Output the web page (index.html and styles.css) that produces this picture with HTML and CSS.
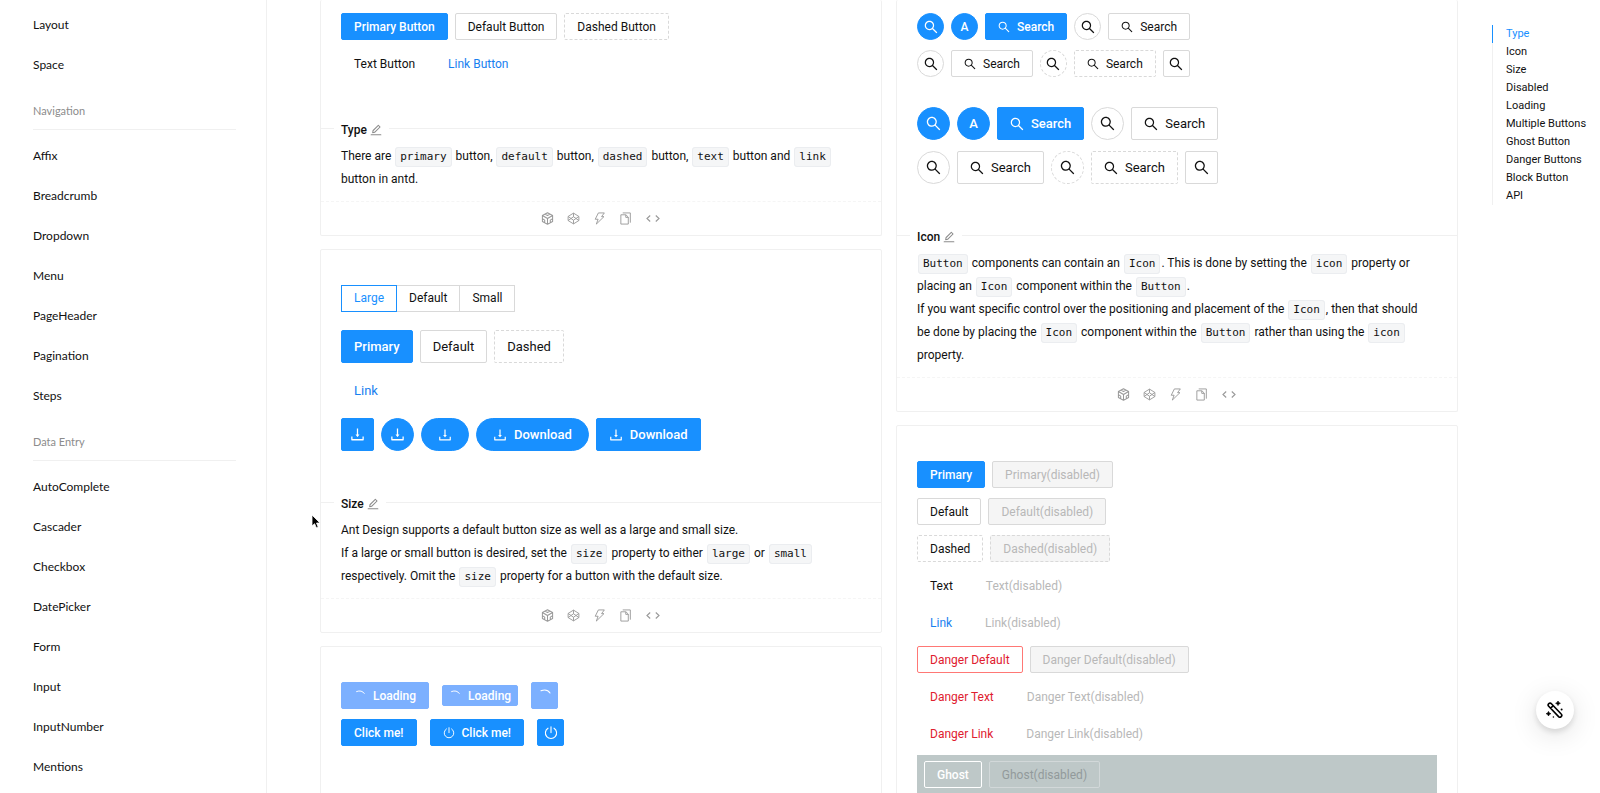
FILE: index.html
```html
<!DOCTYPE html>
<html lang="en">
<head>
  <meta charset="UTF-8">
  <meta name="viewport" content="width=device-width, initial-scale=1.0">
  <title>Button - Ant Design</title>
  <link rel="stylesheet" href="styles.css">
</head>
<body>
  <!-- Icon definitions -->
  <svg class="sprite" aria-hidden="true">
    <symbol id="search" viewBox="64 64 896 896"><path fill="currentColor" d="M909.6 854.5L649.9 594.8C690.2 542.7 712 479 712 412c0-80.2-31.3-155.4-87.9-212.1-56.6-56.7-132-87.9-212.1-87.9s-155.5 31.3-212.1 87.9C143.2 256.5 112 331.8 112 412c0 80.1 31.3 155.5 87.9 212.1C256.5 680.8 331.8 712 412 712c67 0 130.6-21.8 182.7-62l259.7 259.6a8.2 8.2 0 0011.6 0l43.6-43.5a8.2 8.2 0 000-11.6zM570.4 570.4C528 612.7 471.8 636 412 636s-116-23.3-158.4-65.6C211.3 528 188 471.8 188 412s23.3-116.1 65.6-158.4C296 211.3 352.2 188 412 188s116.1 23.2 158.4 65.6S636 352.2 636 412s-23.3 116.1-65.6 158.4z"/></symbol>
    <symbol id="download" viewBox="64 64 896 896"><path fill="currentColor" d="M505.7 661a8 8 0 0012.6 0l112-141.7c4.1-5.2.4-12.9-6.3-12.9h-74.1V168c0-4.4-3.6-8-8-8h-60c-4.4 0-8 3.6-8 8v338.3H400c-6.7 0-10.4 7.7-6.3 12.9l112 141.8zM878 626h-60c-4.4 0-8 3.6-8 8v154H214V634c0-4.4-3.6-8-8-8h-60c-4.4 0-8 3.6-8 8v198c0 17.7 14.3 32 32 32h684c17.7 0 32-14.3 32-32V634c0-4.4-3.6-8-8-8z"/></symbol>
    <symbol id="edit" viewBox="64 64 896 896"><path fill="currentColor" d="M257.7 752c2 0 4-.2 6-.5L431.9 722c2-.4 3.9-1.3 5.3-2.8l423.9-423.9a9.96 9.96 0 000-14.1L694.9 114.9c-1.9-1.9-4.4-2.9-7.1-2.9s-5.2 1-7.1 2.9L256.8 538.8c-1.5 1.5-2.4 3.3-2.8 5.3l-29.5 168.2a33.5 33.5 0 009.4 29.8c6.6 6.4 14.9 9.9 23.8 9.9zm67.4-174.4L687.8 215l73.3 73.3-362.7 362.6-88.9 15.7 15.6-89zM880 836H144c-17.7 0-32 14.3-32 32v36c0 4.4 3.6 8 8 8h784c4.4 0 8-3.6 8-8v-36c0-17.7-14.3-32-32-32z"/></symbol>
    <symbol id="power" viewBox="0 0 14 14"><path fill="none" stroke="currentColor" stroke-width="1.1" stroke-linecap="round" d="M4 2.2a5.6 5.6 0 1 0 6 0M7 .8v5.8"/></symbol>
    <symbol id="spin" viewBox="0 0 14 14"><path fill="none" stroke="currentColor" stroke-width="1.1" stroke-linecap="round" d="M3 1.800Q9 -.500 12 4"/></symbol>
    <symbol id="box" viewBox="0 0 14 14"><path fill="none" stroke="currentColor" stroke-width="1.1" stroke-linejoin="round" d="M7 .8l5.500 3v6.400L7 13.200l-5.500-3V3.800zM1.500 3.800L7 7l5.500-3.200M7 7v6.200M4.300 2.300L7 3.800l2.700-1.500M1.500 7.200l2.500 1.500v2.800M12.500 7.200L10 8.700v2.800"/></symbol>
    <symbol id="codepen" viewBox="0 0 14 14"><path fill="none" stroke="currentColor" stroke-linejoin="round" d="M7 1.200l5.800 3.600v4.400L7 12.800 1.200 9.200V4.800zM1.200 4.800L7 8.900l5.800-4.100M1.200 9.200L7 5.100l5.800 4.100M7 1.200v3.900M7 8.900v3.900"/></symbol>
    <symbol id="bolt" viewBox="0 0 14 14"><path fill="none" stroke="currentColor" stroke-linejoin="round" d="M5.800 1h6.400L9.200 5h2.600L3.600 13l1.900-5.200H2.400z"/></symbol>
    <symbol id="copy" viewBox="0 0 14 14"><path fill="none" stroke="currentColor" stroke-linejoin="round" d="M4 1h8.200v10.500M2 3h5.500L10 5.500V13H2zM7.300 3.200v2.600h2.600"/></symbol>
    <symbol id="code" viewBox="0 0 16 14"><path fill="none" stroke="currentColor" stroke-width="1.200" d="M5 3.800L1.500 7 5 10.200M11 3.800L14.500 7 11 10.200"/></symbol>
  </svg>

  <div class="page">
    <!-- Component menu -->
    <nav class="sidebar">
      <a href="#layout">Layout</a>
      <a href="#space">Space</a>
      <div class="group">Navigation</div>
      <a href="#affix">Affix</a>
      <a href="#breadcrumb">Breadcrumb</a>
      <a href="#dropdown">Dropdown</a>
      <a href="#menu">Menu</a>
      <a href="#pageheader">PageHeader</a>
      <a href="#pagination">Pagination</a>
      <a href="#steps">Steps</a>
      <div class="group">Data Entry</div>
      <a href="#autocomplete">AutoComplete</a>
      <a href="#cascader">Cascader</a>
      <a href="#checkbox">Checkbox</a>
      <a href="#datepicker">DatePicker</a>
      <a href="#form">Form</a>
      <a href="#input">Input</a>
      <a href="#inputnumber">InputNumber</a>
      <a href="#mentions">Mentions</a>
    </nav>

    <main class="demos">
      <div class="column">
        <!-- Type -->
        <section class="card card-first" id="type">
          <div class="demo">
            <div class="row">
              <button class="btn primary">Primary Button</button>
              <button class="btn">Default Button</button>
              <button class="btn dashed">Dashed Button</button>
            </div>
            <div class="row">
              <button class="btn text">Text Button</button>
              <button class="btn link">Link Button</button>
            </div>
          </div>
          <div class="meta">
            <h2 class="title">Type <svg><use href="#edit"/></svg></h2>
            <p>There are <code>primary</code> button, <code>default</code> button, <code>dashed</code> button, <code>text</code> button and <code>link</code> button in antd.</p>
          </div>
          <div class="actions">
            <svg><use href="#box"/></svg>
            <svg><use href="#codepen"/></svg>
            <svg><use href="#bolt"/></svg>
            <svg><use href="#copy"/></svg>
            <svg class="wide"><use href="#code"/></svg>
          </div>
        </section>

        <!-- Size -->
        <section class="card" id="size">
          <div class="demo">
            <div class="radio-group">
              <label><input type="radio" name="size" checked><span>Large</span></label>
              <label><input type="radio" name="size"><span>Default</span></label>
              <label><input type="radio" name="size"><span>Small</span></label>
            </div>
            <div class="row large">
              <button class="btn primary">Primary</button>
              <button class="btn">Default</button>
              <button class="btn dashed">Dashed</button>
            </div>
            <div class="row large">
              <button class="btn link">Link</button>
            </div>
            <div class="row large">
              <button class="btn primary icon-only" aria-label="Download"><svg><use href="#download"/></svg></button>
              <button class="btn primary icon-only circle" aria-label="Download"><svg><use href="#download"/></svg></button>
              <button class="btn primary round" aria-label="Download"><svg><use href="#download"/></svg></button>
              <button class="btn primary round"><svg><use href="#download"/></svg>Download</button>
              <button class="btn primary"><svg><use href="#download"/></svg>Download</button>
            </div>
          </div>
          <div class="meta">
            <h2 class="title">Size <svg><use href="#edit"/></svg></h2>
            <p>Ant Design supports a default button size as well as a large and small size.</p>
            <p>If a large or small button is desired, set the <code>size</code> property to either <code>large</code> or <code>small</code> respectively. Omit the <code>size</code> property for a button with the default size.</p>
          </div>
          <div class="actions">
            <svg><use href="#box"/></svg>
            <svg><use href="#codepen"/></svg>
            <svg><use href="#bolt"/></svg>
            <svg><use href="#copy"/></svg>
            <svg class="wide"><use href="#code"/></svg>
          </div>
        </section>

        <!-- Loading -->
        <section class="card" id="loading">
          <div class="demo">
            <div class="row spaced">
              <button class="btn primary loading"><svg><use href="#spin"/></svg>Loading</button>
              <button class="btn primary loading small"><svg><use href="#spin"/></svg>Loading</button>
              <button class="btn primary loading icon-only" aria-label="Loading"><svg><use href="#spin"/></svg></button>
            </div>
            <div class="row spaced">
              <button class="btn primary">Click me!</button>
              <button class="btn primary"><svg><use href="#power"/></svg>Click me!</button>
              <button class="btn primary icon-only" aria-label="Power"><svg><use href="#power"/></svg></button>
            </div>
          </div>
          <div class="meta"></div>
        </section>
      </div>

      <div class="column">
        <!-- Icon -->
        <section class="card card-first" id="icon">
          <div class="demo">
            <div class="row">
              <button class="btn primary icon-only circle" aria-label="Search"><svg><use href="#search"/></svg></button>
              <button class="btn primary icon-only circle">A</button>
              <button class="btn primary"><svg><use href="#search"/></svg>Search</button>
              <button class="btn icon-only circle" aria-label="Search"><svg><use href="#search"/></svg></button>
              <button class="btn"><svg><use href="#search"/></svg>Search</button>
            </div>
            <div class="row">
              <button class="btn icon-only circle" aria-label="Search"><svg><use href="#search"/></svg></button>
              <button class="btn"><svg><use href="#search"/></svg>Search</button>
              <button class="btn dashed icon-only circle" aria-label="Search"><svg><use href="#search"/></svg></button>
              <button class="btn dashed"><svg><use href="#search"/></svg>Search</button>
              <button class="btn icon-only" aria-label="Search"><svg><use href="#search"/></svg></button>
            </div>
            <div class="row large break">
              <button class="btn primary icon-only circle" aria-label="Search"><svg><use href="#search"/></svg></button>
              <button class="btn primary icon-only circle">A</button>
              <button class="btn primary"><svg><use href="#search"/></svg>Search</button>
              <button class="btn icon-only circle" aria-label="Search"><svg><use href="#search"/></svg></button>
              <button class="btn"><svg><use href="#search"/></svg>Search</button>
            </div>
            <div class="row large">
              <button class="btn icon-only circle" aria-label="Search"><svg><use href="#search"/></svg></button>
              <button class="btn"><svg><use href="#search"/></svg>Search</button>
              <button class="btn dashed icon-only circle" aria-label="Search"><svg><use href="#search"/></svg></button>
              <button class="btn dashed"><svg><use href="#search"/></svg>Search</button>
              <button class="btn icon-only" aria-label="Search"><svg><use href="#search"/></svg></button>
            </div>
          </div>
          <div class="meta">
            <h2 class="title">Icon <svg><use href="#edit"/></svg></h2>
            <p><code>Button</code> components can contain an <code>Icon</code>. This is done by setting the <code>icon</code> property or placing an <code>Icon</code> component within the <code>Button</code>.</p>
            <p>If you want specific control over the positioning and placement of the <code>Icon</code>, then that should be done by placing the <code>Icon</code> component within the <code>Button</code> rather than using the <code>icon</code> property.</p>
          </div>
          <div class="actions">
            <svg><use href="#box"/></svg>
            <svg><use href="#codepen"/></svg>
            <svg><use href="#bolt"/></svg>
            <svg><use href="#copy"/></svg>
            <svg class="wide"><use href="#code"/></svg>
          </div>
        </section>

        <!-- Disabled -->
        <section class="card" id="disabled">
          <div class="demo">
            <div class="row">
              <button class="btn primary">Primary</button>
              <button class="btn" disabled>Primary(disabled)</button>
            </div>
            <div class="row">
              <button class="btn">Default</button>
              <button class="btn" disabled>Default(disabled)</button>
            </div>
            <div class="row">
              <button class="btn dashed">Dashed</button>
              <button class="btn dashed" disabled>Dashed(disabled)</button>
            </div>
            <div class="row">
              <button class="btn text">Text</button>
              <button class="btn text" disabled>Text(disabled)</button>
            </div>
            <div class="row">
              <button class="btn link">Link</button>
              <button class="btn link" disabled>Link(disabled)</button>
            </div>
            <div class="row">
              <button class="btn danger">Danger Default</button>
              <button class="btn" disabled>Danger Default(disabled)</button>
            </div>
            <div class="row">
              <button class="btn text danger">Danger Text</button>
              <button class="btn text" disabled>Danger Text(disabled)</button>
            </div>
            <div class="row">
              <button class="btn link danger">Danger Link</button>
              <button class="btn link" disabled>Danger Link(disabled)</button>
            </div>
            <div class="row ghost-panel">
              <button class="btn ghost">Ghost</button>
              <button class="btn ghost" disabled>Ghost(disabled)</button>
            </div>
          </div>
        </section>
      </div>
    </main>

    <!-- Page anchors -->
    <aside class="toc">
      <ul>
        <li><a class="active" href="#type">Type</a></li>
        <li><a href="#icon">Icon</a></li>
        <li><a href="#size">Size</a></li>
        <li><a href="#disabled">Disabled</a></li>
        <li><a href="#loading">Loading</a></li>
        <li><a href="#multiple">Multiple Buttons</a></li>
        <li><a href="#ghost">Ghost Button</a></li>
        <li><a href="#danger">Danger Buttons</a></li>
        <li><a href="#block">Block Button</a></li>
        <li><a href="#api">API</a></li>
      </ul>
    </aside>
  </div>

  <button class="theme-button" aria-label="Theme">
    <svg viewBox="0 0 18 18">
      <path fill="none" stroke="#000" stroke-width="1.600" stroke-linejoin="round" d="M2.700 5.200a1.800 1.800 0 0 1 2.700-2.500L15.200 13a1.800 1.800 0 0 1-2.600 2.600zM4.700 7.100l2.400-2.400"/>
      <path d="M12 0l.8 1.500 1.600.8-1.600.8L12 4.600l-.8-1.500-1.600-.8 1.600-.8zM2.500 10.400l.8 1.500 1.600.8-1.600.8-.8 1.500-.8-1.500-1.600-.8 1.600-.8z" stroke="#000" stroke-width=".6"/>
      <circle cx="15.600" cy="8.500" r="1"/>
      <circle cx="7.400" cy="16" r=".8"/>
    </svg>
  </button>

  <svg class="cursor" viewBox="0 0 10 15" aria-hidden="true"><path d="M1 1v11l2.600-2.300 1.700 4 1.900-.8-1.700-3.900H9z" fill="#000" stroke="#fff" stroke-width=".8"/></svg>
</body>
</html>
```

FILE: styles.css
```css
* {
  box-sizing: border-box;
}

body {
  margin: 0;
  font-family: Roboto, "Liberation Sans", sans-serif;
  font-size: 12px;
  color: #111;
  background: #fff;
}

a {
  color: inherit;
  text-decoration: none;
}

.sprite {
  display: none;
}

.page {
  display: flex;
  height: 100vh;
  overflow: hidden;
}

/* Sidebar */
.sidebar {
  flex: none;
  width: 267px;
  padding: 5px 30px 0 33px;
  border-right: 1px solid #f0f0f0;
  font-family: Lato, sans-serif;
}

.sidebar a {
  display: block;
  height: 40px;
  line-height: 40px;
}

.sidebar .group {
  height: 45px;
  margin-bottom: 6px;
  padding-top: 6px;
  line-height: 40px;
  font-size: 11px;
  color: #8c8c8c;
  border-bottom: 1px solid #f0f0f0;
}

/* Demo cards */
.demos {
  flex: 1;
  display: flex;
  gap: 14px;
  padding-left: 53px;
}

.column {
  flex: 1;
  min-width: 0;
}

.card {
  margin-bottom: 13px;
  border: 1px solid #f0f0f0;
  border-radius: 2px;
}

.demo {
  padding: 35px 20px 51px;
}

.card-first {
  border-top: none;
}

.card-first .demo {
  padding-top: 13px;
}

.row {
  display: flex;
  align-items: center;
  gap: 7px;
}

.row + .row {
  margin-top: 10px;
}

.row.large + .row.large {
  margin-top: 11px;
}

.row + .row.break {
  margin-top: 30px;
}

.row.spaced {
  gap: 13px;
}

.meta {
  position: relative;
  padding: 16px 20px 10px;
  border-top: 1px solid #f0f0f0;
  line-height: 23px;
}

.meta p {
  margin: 0;
  padding-right: 10px;
}

.title {
  position: absolute;
  top: -9px;
  left: 13px;
  display: flex;
  align-items: center;
  gap: 3px;
  margin: 0;
  padding: 0 7px;
  font-size: 12px;
  font-weight: 500;
  line-height: 20px;
  background: #fff;
}

.title svg {
  width: 12px;
  height: 12px;
  color: #8c8c8c;
}

code {
  margin: 0 1px;
  padding: 2px 4px 3px;
  font-family: "DejaVu Sans Mono", monospace;
  font-size: 11px;
  line-height: 13px;
  background: #f5f6f7;
  border: 1px solid #ebedf0;
  border-radius: 3px;
}

.actions {
  display: flex;
  justify-content: center;
  align-items: center;
  gap: 13px;
  height: 34px;
  border-top: 1px dashed #f5f5f5;
  color: #999;
}

.actions svg {
  width: 13px;
  height: 13px;
}

.actions .wide {
  width: 16px;
}

/* Buttons */
.btn {
  display: inline-flex;
  justify-content: center;
  align-items: center;
  gap: 7px;
  height: 27px;
  padding: 0 12px;
  font: inherit;
  color: #111;
  background: #fff;
  border: 1px solid #d9d9d9;
  border-radius: 2px;
  white-space: nowrap;
}

.btn svg {
  width: 12px;
  height: 12px;
}

.btn.primary {
  font-weight: 500;
  color: #fff;
  background: #1890ff;
  border-color: #1890ff;
}

.btn.dashed {
  border-style: dashed;
}

.btn.text,
.btn.link {
  background: none;
  border-color: transparent;
}

.btn.link {
  color: #1880f0;
}

.btn.danger {
  color: #e0202f;
  border-color: #ff7875;
}

.btn.text.danger,
.btn.link.danger {
  border-color: transparent;
}

.btn.icon-only {
  width: 27px;
  padding: 0;
}

.btn.icon-only svg {
  width: 14px;
  height: 14px;
}

.btn.circle {
  border-radius: 50%;
}

.btn:disabled {
  color: #b8b8b8;
  background: #f5f5f5;
}

.btn.text:disabled,
.btn.link:disabled {
  color: #b8b8b8;
  background: none;
}

.large .btn {
  height: 33px;
  font-size: 13px;
}

.large .btn svg {
  width: 14px;
  height: 14px;
}

.large .btn.icon-only {
  width: 33px;
}

.large .btn.icon-only svg {
  width: 15px;
  height: 15px;
}

.btn.round {
  padding: 0 16px;
  border-radius: 17px;
}

.btn.loading {
  background: #7cb0ff;
  border-color: #7cb0ff;
}

.btn.small {
  height: 21px;
  padding: 0 6px;
}

.btn.ghost {
  font-weight: 500;
  color: #fff;
  background: none;
  border-color: #fff;
}

.btn.ghost:disabled {
  font-weight: 400;
  color: #929a9b;
  border-color: #d2d8d9;
}

.row + .ghost-panel {
  margin-top: 8px;
  padding: 6px 7px;
  background: #bec8c8;
}

/* Radio buttons */
.radio-group {
  display: flex;
  margin-bottom: 18px;
}

.radio-group input {
  position: absolute;
  opacity: 0;
}

.radio-group span {
  display: block;
  height: 27px;
  padding: 0 12px;
  line-height: 25px;
  border: 1px solid #d9d9d9;
}

.radio-group label + label span {
  border-left: none;
}

.radio-group input:checked + span {
  color: #1890ff;
  border-color: #1890ff;
}

/* Anchors */
.toc {
  flex: none;
  width: 142px;
  padding: 25px 0 0 34px;
  font-size: 11px;
}

.toc ul {
  margin: 0;
  padding: 0;
  list-style: none;
  border-left: 1px solid #f0f0f0;
}

.toc a {
  display: block;
  margin-left: -1px;
  padding-left: 13px;
  line-height: 18px;
  border-left: 1px solid transparent;
  white-space: nowrap;
}

.toc .active {
  color: #1890ff;
  border-color: #1890ff;
}

/* Floating items */
.theme-button {
  position: fixed;
  right: 26px;
  bottom: 64px;
  display: flex;
  justify-content: center;
  align-items: center;
  width: 38px;
  height: 38px;
  padding: 0;
  background: #fff;
  border: none;
  border-radius: 50%;
  box-shadow: 0 3px 6px rgba(0, 0, 0, 0.12), 0 6px 28px rgba(0, 0, 0, 0.12);
}

.theme-button svg {
  width: 18px;
  height: 18px;
}

.cursor {
  position: fixed;
  top: 514px;
  left: 311px;
  width: 10px;
  height: 15px;
}
```
